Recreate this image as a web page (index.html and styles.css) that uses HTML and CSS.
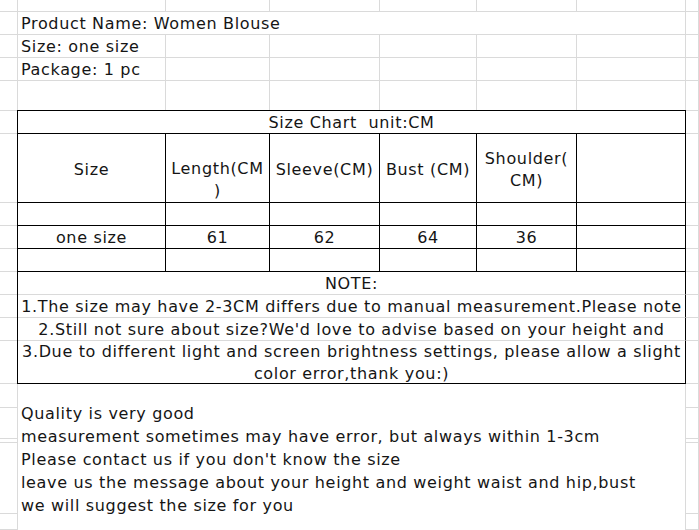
FILE: index.html
```html
<!DOCTYPE html>
<html lang="en">
<head>
<meta charset="utf-8">
<title>Size Chart</title>
<link rel="stylesheet" href="styles.css">
</head>
<body>
<div class="sheet">
  <!-- row 1 -->
  <div class="c"></div><div class="c"></div><div class="c"></div><div class="c"></div><div class="c"></div><div class="c"></div><div class="c"></div><div class="c"></div>
  <!-- row 2 -->
  <div class="c"></div><div class="c span6 txt">Product Name: Women Blouse</div><div class="c"></div>
  <!-- row 3 -->
  <div class="c"></div><div class="c txt">Size: one size</div><div class="c"></div><div class="c"></div><div class="c"></div><div class="c"></div><div class="c"></div><div class="c"></div>
  <!-- row 4 -->
  <div class="c"></div><div class="c txt">Package: 1 pc</div><div class="c"></div><div class="c"></div><div class="c"></div><div class="c"></div><div class="c"></div><div class="c"></div>
  <!-- row 5 -->
  <div class="c"></div><div class="c"></div><div class="c"></div><div class="c"></div><div class="c"></div><div class="c"></div><div class="c"></div><div class="c"></div>
  <!-- rows 6-14: side cells -->
  <div class="c"></div><div class="c"></div>
  <div class="c"></div><div class="c"></div>
  <div class="c"></div><div class="c"></div>
  <div class="c"></div><div class="c"></div>
  <div class="c"></div><div class="c"></div>
  <div class="c"></div><div class="c"></div>
  <div class="c"></div><div class="c"></div>
  <div class="c"></div><div class="c"></div>
  <div class="c"></div><div class="c"></div>
  <!-- rows 15-19: side cells -->
  <div class="c"></div><div class="c"></div>
  <div class="c"></div><div class="c"></div>
  <div class="c"></div><div class="c"></div>
  <div class="c"></div><div class="c"></div>
  <div class="c"></div><div class="c"></div>

  <div class="notes">
    <p>Quality is very good</p>
    <p>measurement sometimes may have error, but always within 1-3cm</p>
    <p>Please contact us if you don't know the size</p>
    <p>leave us the message about your height and weight waist and hip,bust</p>
    <p>we will suggest the size for you</p>
  </div>

  <div class="chart">
    <div class="t full title">Size Chart  unit:CM</div>

    <div class="t head">Size</div>
    <div class="t head bottom">Length(CM<br>)</div>
    <div class="t head">Sleeve(CM)</div>
    <div class="t head">Bust (CM)</div>
    <div class="t head">Shoulder(<br>CM)</div>
    <div class="t head"></div>

    <div class="t"></div><div class="t"></div><div class="t"></div><div class="t"></div><div class="t"></div><div class="t"></div>

    <div class="t">one size</div><div class="t">61</div><div class="t">62</div><div class="t">64</div><div class="t">36</div><div class="t"></div>

    <div class="t"></div><div class="t"></div><div class="t"></div><div class="t"></div><div class="t"></div><div class="t"></div>

    <div class="t full note">NOTE:</div>
    <div class="t full note clip">1.The size may have 2-3CM differs due to manual measurement.Please note</div>
    <div class="t full note clip">2.Still not sure about size?We'd love to advise based on your height and</div>
    <div class="t full last">3.Due to different light and screen brightness settings, please allow a slight<br>color error,thank you:)</div>
  </div>
</div>
</body>
</html>
```

FILE: styles.css
```css
html, body {
  margin: 0;
  padding: 0;
  background: #ffffff;
}

body {
  font-family: "DejaVu Sans", Verdana, sans-serif;
  font-size: 16px;
  letter-spacing: 0.66px;
  color: #151515;
  width: 699px;
  height: 530px;
  overflow: hidden;
}

.sheet {
  display: grid;
  grid-template-columns: 18px 148px 104px 110px 97px 100px 109px 13px;
  grid-template-rows: 12px 23px 23px 23px 30px 23px 69px 23px 23px 23px 23px 23px 23px 43px 24px 31px 4px 71px 16px;
  width: 699px;
  height: 530px;
}

.c {
  box-sizing: border-box;
  border-right: 1px solid #dadada;
  border-bottom: 1px solid #dadada;
  min-width: 0;
}

.span6 {
  grid-column: span 6;
}

.txt {
  line-height: 23px;
  padding-left: 3px;
  white-space: nowrap;
  overflow: visible;
  position: relative;
  z-index: 1;
}

.notes {
  grid-column: 2 / 8;
  grid-row: 15 / 20;
  background: #ffffff;
  border-right: 1px solid #dadada;
  padding: 18px 0 0 3px;
  box-sizing: border-box;
  line-height: 23px;
  white-space: nowrap;
  overflow: hidden;
}

.notes p {
  margin: 0;
}

.chart {
  grid-column: 2 / 8;
  grid-row: 6 / 15;
  margin: -1px 0 0 -1px;
  border-top: 1px solid #000;
  border-left: 1px solid #000;
  background: #ffffff;
  display: grid;
  grid-template-columns: 148px 104px 110px 97px 100px 109px;
  grid-template-rows: 23px 69px 23px 23px 23px 23px 23px 23px 43px;
  position: relative;
  z-index: 2;
}

.t {
  box-sizing: border-box;
  border-right: 1px solid #000;
  border-bottom: 1px solid #000;
  display: flex;
  align-items: center;
  justify-content: center;
  text-align: center;
  line-height: 23px;
  white-space: nowrap;
  min-width: 0;
}

.full {
  grid-column: 1 / -1;
}

.title {
  white-space: pre;
}

.head {
  line-height: 22px;
  padding-top: 3px;
}

.head.bottom {
  align-items: flex-end;
  padding-top: 0;
}

.note {
  border-bottom-color: #dadada;
}

.clip {
  overflow: hidden;
}

.last {
  line-height: 22px;
  align-items: flex-start;
}
```
